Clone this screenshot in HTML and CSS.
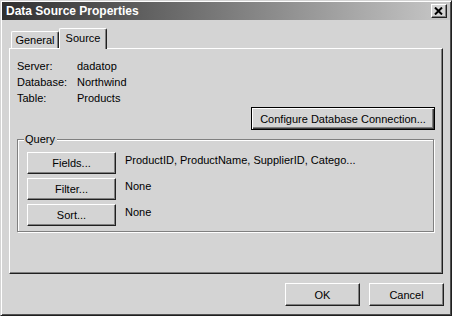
FILE: index.html
```html
<!DOCTYPE html>
<html>
<head>
<meta charset="utf-8">
<link rel="stylesheet" href="styles.css">
</head>
<body>
<div class="window">
  <div class="titlebar">
    <span class="title">Data Source Properties</span>
    <span class="close">
      <svg width="9" height="8" viewBox="0 0 9 8"><path d="M1 0.5 L8 7.5 M8 0.5 L1 7.5" stroke="#000" stroke-width="2" fill="none"/></svg>
    </span>
  </div>
  <div class="content">
    <div class="tabs">
      <div class="tab">General</div>
      <div class="tab active">Source</div>
    </div>
    <div class="panel">
      <div class="info">
        <div class="row"><span class="lbl">Server:</span><span>dadatop</span></div>
        <div class="row"><span class="lbl">Database:</span><span>Northwind</span></div>
        <div class="row"><span class="lbl">Table:</span><span>Products</span></div>
      </div>
      <div class="cfg-row">
        <div class="btn default">Configure Database Connection...</div>
      </div>
      <fieldset class="group">
        <legend>Query</legend>
        <div class="qrow"><div class="btn qbtn">Fields...</div><span class="qval">ProductID, ProductName, SupplierID, Catego...</span></div>
        <div class="qrow"><div class="btn qbtn">Filter...</div><span class="qval">None</span></div>
        <div class="qrow"><div class="btn qbtn">Sort...</div><span class="qval">None</span></div>
      </fieldset>
    </div>
    <div class="footer">
      <div class="btn fbtn">OK</div>
      <div class="btn fbtn">Cancel</div>
    </div>
  </div>
</div>
</body>
</html>
```

FILE: styles.css
```css
* { box-sizing: border-box; }
html, body { margin: 0; padding: 0; }
body {
  background: #d4d4d4;
  font-family: "Liberation Sans", Arial, sans-serif;
  font-size: 11px;
  color: #000;
}
.window {
  width: 452px;
  height: 316px;
  background: #d4d4d4;
  border-top: 1px solid #d4d4d4;
  border-left: 1px solid #d4d4d4;
  border-right: 1px solid #202020;
  border-bottom: 1px solid #202020;
  box-shadow: inset 1px 1px 0 #ffffff, inset -1px -1px 0 #505050;
  padding: 1px;
  display: flex;
  flex-direction: column;
}
.titlebar {
  height: 18px;
  background: linear-gradient(to right, #303030, #747474 45%, #c8c8c8);
  display: flex;
  align-items: center;
  justify-content: space-between;
  padding: 0 3px 0 4px;
}
.title {
  color: #fff;
  font-weight: bold;
  font-size: 12px;
}
.close {
  width: 16px;
  height: 14px;
  background: #d4d4d4;
  border-top: 1px solid #fff;
  border-left: 1px solid #fff;
  border-right: 1px solid #202020;
  border-bottom: 1px solid #202020;
  box-shadow: inset -1px -1px 0 #808080;
  display: flex;
  align-items: center;
  justify-content: center;
  padding-right: 1px;
}
.close svg { display: block; }
.content {
  flex: 1;
  padding: 9px 6px 0 7px;
  display: flex;
  flex-direction: column;
}
.tabs {
  display: flex;
  align-items: flex-end;
  height: 20px;
  padding-left: 2px;
  margin-bottom: -1px;
  position: relative;
  z-index: 1;
}
.tab {
  width: 48px;
  height: 17px;
  border-top: 1px solid #fff;
  border-left: 1px solid #fff;
  border-right: 1px solid #202020;
  box-shadow: inset -1px 0 0 #808080;
  border-radius: 2px 2px 0 0;
  text-align: center;
  line-height: 15px;
  padding-top: 1px;
  margin-bottom: 1px;
}
.tab.active {
  height: 21px;
  width: 48px;
  margin-bottom: 0;
  background: #d4d4d4;
  line-height: 15px;
  padding-top: 2px;
}
.panel {
  width: 434px;
  height: 226px;
  border-top: 1px solid #fff;
  border-left: 1px solid #fff;
  border-right: 1px solid #202020;
  border-bottom: 1px solid #202020;
  box-shadow: inset -1px -1px 0 #808080;
  padding: 9px 7px 0 7px;
  display: flex;
  flex-direction: column;
}
.info .row {
  display: flex;
  height: 16px;
  line-height: 16px;
}
.lbl { width: 60px; }
.cfg-row {
  display: flex;
  justify-content: flex-end;
  margin-top: 1px;
}
.btn {
  background: #d4d4d4;
  border-top: 1px solid #fff;
  border-left: 1px solid #fff;
  border-right: 1px solid #202020;
  border-bottom: 1px solid #202020;
  box-shadow: inset -1px -1px 0 #808080;
  display: flex;
  align-items: center;
  justify-content: center;
}
.btn.default {
  width: 184px;
  height: 23px;
  border: 1px solid #000;
  box-shadow: inset 1px 1px 0 #fff, inset -1px -1px 0 #404040, inset -2px -2px 0 #808080;
}
.group {
  margin: 2px 1px 0 0;
  padding: 6px 9px 5px 9px;
  border: 1px solid #808080;
  box-shadow: 1px 1px 0 #fff, inset 1px 1px 0 #fff;
  min-width: 0;
}
.group legend {
  padding: 0 2px 0 1px;
  margin-left: -3px;
  line-height: 14px;
  background: #d4d4d4;
}
.qrow {
  display: flex;
  align-items: flex-start;
  gap: 9px;
  margin-bottom: 4px;
}
.qrow:last-child { margin-bottom: 0; }
.qbtn {
  width: 89px;
  height: 22px;
  padding-bottom: 1px;
}
.qval {
  line-height: 14px;
  padding-top: 1px;
}
.footer {
  display: flex;
  justify-content: flex-end;
  gap: 9px;
  margin-top: 9px;
  padding-right: 0;
}
.fbtn {
  width: 75px;
  height: 23px;
}
```
